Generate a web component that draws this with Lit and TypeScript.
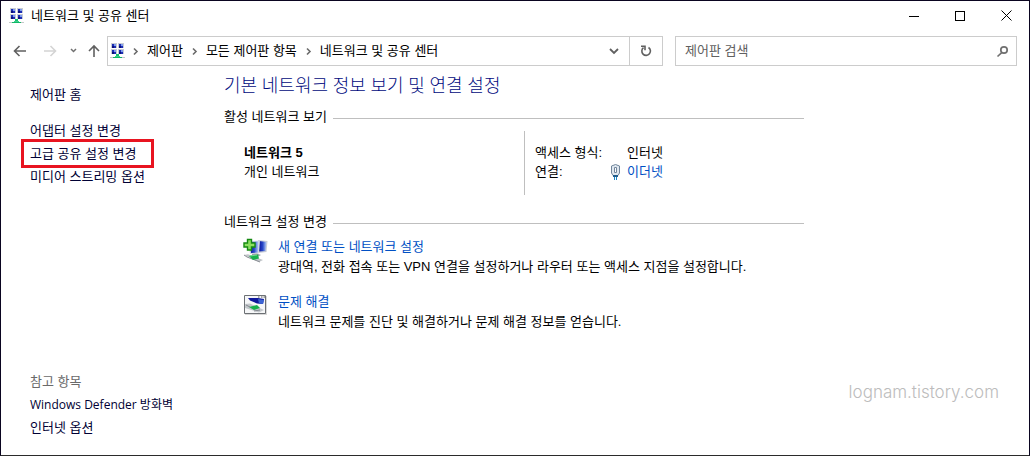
import { LitElement, html, svg, css } from "lit";
import { customElement } from "lit/decorators.js";

const monitor = (x: number, y: number) => svg`
  <rect x=${x} y=${y} width="6" height="5" fill="#c9ccd4"/>
  <rect x=${x + 1} y=${y + 1} width="4" height="4" fill="#1b2cb4"/>
  <rect x=${x + 3} y=${y + 1} width="2" height="2" fill="#7f9cec"/>
  <rect x=${x + 1} y=${y + 3} width="2" height="2" fill="#0a0f78"/>`;

const networkIcon = html`<svg class="icon" width="16" height="16" viewBox="0 0 16 16" shape-rendering="crispEdges" aria-hidden="true">
  ${monitor(1, 0)}${monitor(8, 0)}${monitor(1, 6)}${monitor(8, 6)}
  <rect x="0" y="14" width="15" height="1" fill="#c4c8c8"/>
  <rect x="6" y="11" width="3" height="3" fill="#18c070"/>
  <rect x="3" y="14" width="9" height="1" fill="#10b868"/>
  <rect x="5" y="13" width="5" height="1" fill="#3ccf8a"/>
</svg>`;

const crumbArrow = html`<svg width="21" height="14" viewBox="0 0 21 14" fill="none" stroke="#6b6b6b" stroke-width="1.600" aria-hidden="true"><path d="M8 4.500l3 3-3 3"/></svg>`;

const crumbs = ["제어판", "모든 제어판 항목", "네트워크 및 공유 센터"];

@customElement("app-root")
export class AppRoot extends LitElement {
  static styles = css`
    :host {
      display: block;
      font: 13px/18px "Liberation Sans", "Noto Sans CJK KR", sans-serif;
      color: #000;
    }
    * { box-sizing: border-box; }
    button, input { font: inherit; color: inherit; border: 0; padding: 0; margin: 0; background: none; }
    svg { display: block; flex: none; }
    a { text-decoration: none; color: inherit; }
    h1, h2, p, dl, dd, ul { margin: 0; padding: 0; font-weight: 400; }
    h2 { font-size: 13px; }
    ul { list-style: none; }

    .window {
      display: flex;
      flex-direction: column;
      min-height: 100vh;
      background: #fff;
      border: 1px solid #0a0520;
      border-bottom-color: #2b2b2b;
    }

    .titlebar { display: flex; align-items: center; height: 29px; padding-left: 8px; gap: 6px; }
    .caption { flex: 1; }
    .winbuttons { display: flex; }
    .winbtn { width: 46px; height: 29px; display: flex; align-items: center; justify-content: center; }

    .navbar { display: flex; align-items: center; padding: 6px 12px 0 11px; }
    .nav { height: 30px; display: flex; align-items: center; }
    .address { display: flex; align-items: center; flex: 1; height: 30px; margin-left: 5px; padding-left: 2px; border: 1px solid #ccc; }
    .crumbs { display: flex; align-items: center; flex: 1; }
    .crumb { display: flex; align-items: center; padding-right: 2px; }
    .drop, .refresh { height: 28px; display: flex; align-items: center; justify-content: center; }
    .drop { width: 30px; }
    .refresh { width: 33px; border-left: 1px solid #ccc; }
    .search { display: flex; align-items: center; width: 342px; height: 30px; margin-left: 12px; padding: 0 7px 0 9px; border: 1px solid #ccc; }
    .query { flex: 1; min-width: 0; outline: 0; }
    .query::placeholder { color: #606060; opacity: 1; }

    .body { display: flex; flex: 1; }
    .side { display: flex; flex-direction: column; width: 223px; flex: none; padding: 20px 0 18px 29px; color: #000034; }
    .tasks { margin-top: 18px; }
    .item { height: 23px; }
    .related { margin-top: auto; }
    .related .item:last-child { height: 18px; }
    .muted { color: #6a6a6a; }
    .product { display: block; font: 12px/18px "Open Sans", "Noto Sans CJK KR", sans-serif; }
    .marked { position: relative; }
    .marked::after {
      content: "";
      position: absolute;
      inset: -7px -17px -7px -9px;
      border: 3px solid #e81420;
      pointer-events: none;
    }

    .main { flex: 1; min-width: 0; max-width: 580px; padding: 7px 0 24px; }
    .title { font: 300 18px/24px "Open Sans", "Noto Sans CJK KR", sans-serif; color: #000a80; }
    .section { display: flex; align-items: center; gap: 6px; }
    .section::after { content: ""; flex: 1; height: 1px; margin-top: 3px; background: #bfbfbf; }
    .first { margin-top: 11px; }
    .second { margin-top: 18px; }

    .active { display: grid; grid-template-columns: 300px 1fr; margin-top: 5px; }
    .name { display: grid; align-content: start; row-gap: 1px; padding: 13px 0 0 20px; }
    .name b { font-weight: 700; }
    .details {
      display: grid;
      grid-template-columns: 76px 16px 1fr;
      grid-template-rows: 18px 18px;
      row-gap: 1px;
      align-items: center;
      height: 64px;
      padding: 13px 0 0 10px;
      border-left: 1px solid #bfbfbf;
    }
    .value { grid-column: 3; }
    .link { color: #0050c4; }

    .action { display: grid; grid-template-columns: 24px 1fr; column-gap: 11px; padding-left: 19px; }
    .action p { margin-top: 2px; }
    .connect { margin-top: 7px; }
    .trouble { margin-top: 17px; }

    .watermark {
      align-self: flex-end;
      margin: 0 30px 51px auto;
      font: 300 17px/24px Inter, sans-serif;
      color: #bcbcbc;
    }
  `;

  render() {
    return html`
      <div class="window">
        <header class="titlebar">
          ${networkIcon}
          <span class="caption">네트워크 및 공유 센터</span>
          <div class="winbuttons">
            <button class="winbtn" aria-label="최소화"><svg width="10" height="10" shape-rendering="crispEdges"><path d="M0 5.500h10" stroke="#000"/></svg></button>
            <button class="winbtn" aria-label="최대화"><svg width="10" height="10" shape-rendering="crispEdges"><path d="M.5.5h9v9h-9z" fill="none" stroke="#000"/></svg></button>
            <button class="winbtn" aria-label="닫기"><svg width="11" height="11"><path d="M.5.5l10 10M10.500.5l-10 10" stroke="#000"/></svg></button>
          </div>
        </header>

        <nav class="navbar">
          <button class="nav" aria-label="뒤로"><svg width="32" height="16" fill="none" stroke="#606060" stroke-width="1.600"><path d="M2.500 8H14M7.500 3L2.500 8l5 5"/></svg></button>
          <button class="nav" aria-label="앞으로"><svg width="24" height="16" fill="none" stroke="#d4d4d4" stroke-width="1.600"><path d="M0 8h11M6.500 3l5 5-5 5"/></svg></button>
          <button class="nav" aria-label="최근 위치"><svg width="18" height="16" fill="none" stroke="#707070" stroke-width="1.500"><path d="M3 6l2.500 2.500L8 6"/></svg></button>
          <button class="nav" aria-label="위로"><svg width="16" height="16" fill="none" stroke="#606060" stroke-width="1.600"><path d="M8 14V3M3 8l5-5 5 5"/></svg></button>
          <div class="address">
            ${networkIcon}
            <div class="crumbs">
              ${crumbs.map((c) => html`<span class="crumb">${crumbArrow}<a href="#">${c}</a></span>`)}
            </div>
            <button class="drop" aria-label="이전 위치"><svg width="10" height="8" fill="none" stroke="#606060" stroke-width="1.800"><path d="M1 2l4 4 4-4"/></svg></button>
            <button class="refresh" aria-label="새로 고침"><svg width="12" height="12" fill="none" stroke="#606060" stroke-width="1.600"><path d="M8.500 2.500A4.300 4.300 0 1 1 3.500 2.700M1 1.300h4v4"/></svg></button>
          </div>
          <label class="search">
            <input class="query" type="search" placeholder="제어판 검색" aria-label="제어판 검색" />
            <svg width="13" height="13" fill="none" stroke="#707070" stroke-width="1.700"><circle cx="8" cy="5" r="3.200"/><path d="M6 7.300L1.500 11.500"/></svg>
          </label>
        </nav>

        <div class="body">
          <aside class="side">
            <a href="#">제어판 홈</a>
            <ul class="tasks">
              <li class="item"><a href="#">어댑터 설정 변경</a></li>
              <li class="item"><a class="marked" href="#">고급 공유 설정 변경</a></li>
              <li class="item"><a href="#">미디어 스트리밍 옵션</a></li>
            </ul>
            <ul class="related">
              <li class="item muted">참고 항목</li>
              <li class="item"><a class="product" href="#">Windows Defender 방화벽</a></li>
              <li class="item"><a href="#">인터넷 옵션</a></li>
            </ul>
          </aside>

          <main class="main">
            <h1 class="title">기본 네트워크 정보 보기 및 연결 설정</h1>
            <h2 class="section first">활성 네트워크 보기</h2>
            <div class="active">
              <div class="name"><b>네트워크 5</b><span>개인 네트워크</span></div>
              <dl class="details">
                <dt>액세스 형식:</dt>
                <dd class="value">인터넷</dd>
                <dt>연결:</dt>
                <svg width="9" height="16" viewBox="0 0 9 16" aria-hidden="true">
                  <path d="M.5 2Q4.500-1 8.500 2v7L7 11.500H2L.5 9z" fill="#dfe7ef" stroke="#71859b"/>
                  <path d="M3.500 3.500h2v5h-2z" fill="#fff" stroke="#71859b"/>
                  <path d="M3 12h1v4H3zM5 12h1v4H5z" fill="#1c86c8"/><path d="M2 11h5v2H2z" fill="#205d8c"/>
                </svg>
                <dd class="value"><a class="link" href="#">이더넷</a></dd>
              </dl>
            </div>

            <h2 class="section second">네트워크 설정 변경</h2>
            <div class="action connect">
              <svg width="25" height="25" viewBox="0 0 25 25" aria-hidden="true">
                <defs>
                  <linearGradient id="scr" x1="0" y1="0" x2="1" y2="0"><stop offset="0" stop-color="#0c149c"/><stop offset=".5" stop-color="#2848c8"/><stop offset="1" stop-color="#b8d0f8"/></linearGradient>
                </defs>
                <path d="M15 2l9.500 1-1 11-8 1z" fill="#c8ccd4"/><path d="M16 3l7.500 1-1 9-6.500.5z" fill="url(#scr)"/>
                <path d="M5 3l12-.5-1 13-9 .5z" fill="#d4d8e0"/><path d="M7 4l8.500-.5-.5 11-7 .5z" fill="url(#scr)"/>
                <path d="M9 16l5-.5 4 1.500-3 1.500-6-1z" fill="#9aa0a8"/>
                <path d="M1 17l4-.8 15 5.800-4 2z" fill="#c0c4c8"/><path d="M1 17l3 2 13 5" stroke="#8a8e94" fill="none"/>
                <path d="M6 18l9-1.500 1 4-6 1.500z" fill="#18b04c"/><path d="M7 18l7-1" stroke="#6ce08c"/>
                <path d="M4.500 1.500h4v3.500H12v4H8.500V12h-4V9H1V5h3.500z" fill="#8de060" stroke="#168a12" stroke-width="1.400"/>
              </svg>
              <div><a class="link" href="#">새 연결 또는 네트워크 설정</a>
              <p>광대역, 전화 접속 또는 VPN 연결을 설정하거나 라우터 또는 액세스 지점을 설정합니다.</p></div>
            </div>
            <div class="action trouble">
              <svg width="25" height="25" viewBox="0 0 25 25" aria-hidden="true">
                <path d="M2 3h22v19H2z" fill="#d8d8d8"/>
                <path d="M1.500 2.500h21v18h-21z" fill="#f6f7f8" stroke="#6c7074"/>
                <path d="M15 4h1.500M18 4h1.500M20.500 4H22" stroke="#555"/>
                <path d="M5 5h10l6 1-1 5-6-.5-7-3z" fill="#10189c"/><path d="M15 6l6 1-1 4-4-.5z" fill="#3c64d4"/>
                <path d="M2 11l5-.5 14 6.500-5 2.500L2 15z" fill="#c4c8cc"/>
                <path d="M6 14l8-2 3 3-6 2z" fill="#18b04c"/><path d="M3 12l4 2M11 18l6-1" stroke="#83888e"/>
              </svg>
              <div><a class="link" href="#">문제 해결</a>
              <p>네트워크 문제를 진단 및 해결하거나 문제 해결 정보를 얻습니다.</p></div>
            </div>
          </main>
          <div class="watermark">lognam.tistory.com</div>
        </div>
      </div>
    `;
  }
}
